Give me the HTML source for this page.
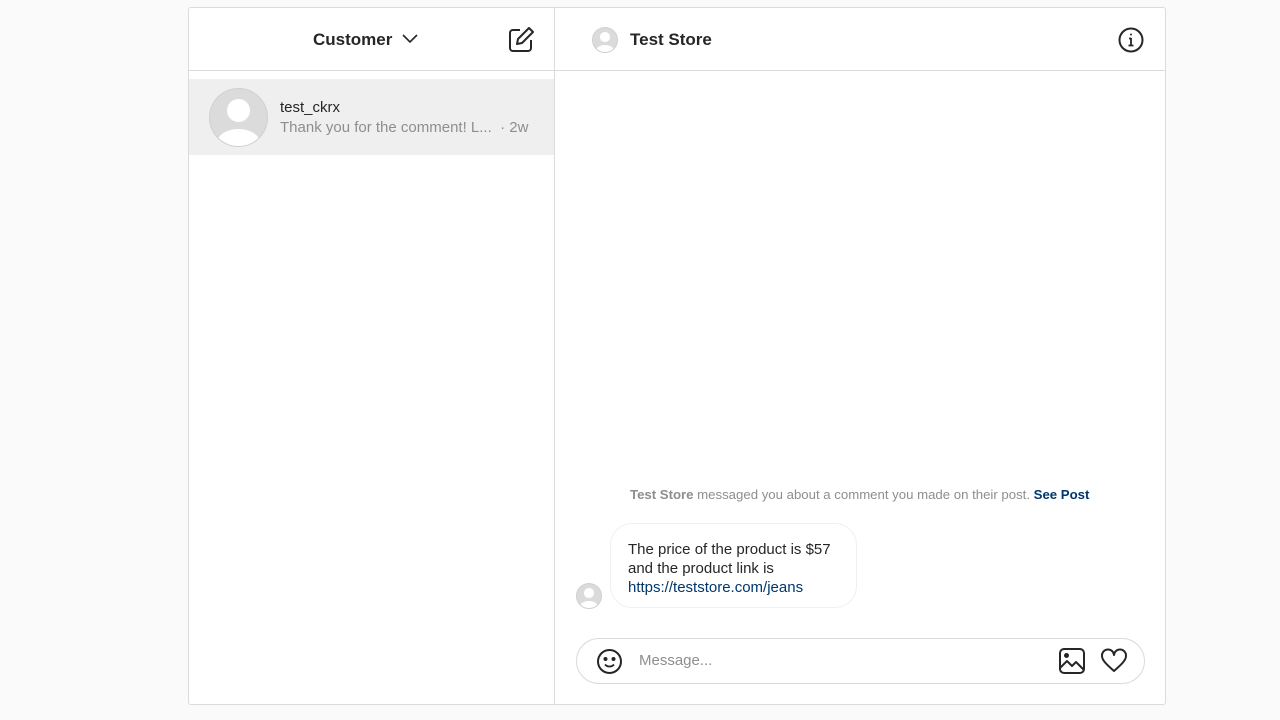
<!DOCTYPE html>
<html><head><meta charset="utf-8"><style>
*{margin:0;padding:0;box-sizing:border-box}
body{width:1280px;height:720px;background:#fafafa;font-family:"Liberation Sans",sans-serif;color:#262626;position:relative;overflow:hidden}
.panel{position:absolute;left:188px;top:7px;width:978px;height:698px;background:#fff;border:1px solid #dbdbdb;border-radius:3px}
.div{position:absolute;left:365px;top:0;bottom:0;width:1px;background:#dbdbdb}
.hline{position:absolute;left:0;right:0;top:62px;height:1px;background:#dbdbdb}
.abs{position:absolute}
.av{position:absolute;border-radius:50%;background:#dbdbdb;overflow:hidden;border:1px solid #d0d0d0}
.av:before{content:"";position:absolute;left:30%;top:18%;width:40%;height:40%;border-radius:50%;background:#fff}
.av:after{content:"";position:absolute;left:12%;top:70%;width:76%;height:50%;border-radius:50%;background:#fff}
</style></head><body>
<div class="panel">
<div class="div"></div><div class="hline"></div>
<div class="abs" style="left:124px;top:22px;font-size:17px;font-weight:bold">Customer</div>
<svg class="abs" style="left:212px;top:25px" width="18" height="12" viewBox="0 0 18 12"><path d="M2 2l7 7 7-7" fill="none" stroke="#262626" stroke-width="1.6"/></svg>
<svg class="abs" style="left:318px;top:18px" width="28" height="28" viewBox="0 0 28 28" fill="none" stroke="#262626" stroke-width="2" stroke-linejoin="round"><path d="M13 4H6a3 3 0 0 0-3 3v15a3 3 0 0 0 3 3h15a3 3 0 0 0 3-3v-8"/><path d="M22 2l4 4-11 11-5 1 1-5z"/></svg>
<div class="abs" style="left:0;top:71px;width:365px;height:76px;background:#efefef"></div>
<div class="av" style="left:20px;top:80px;width:59px;height:59px"></div>
<div class="abs" style="left:91px;top:91px;font-size:15px">test_ckrx</div>
<div class="abs" style="left:91px;top:111px;font-size:15px;color:#8e8e8e">Thank you for the comment! L...&nbsp; · 2w</div>
<div class="av" style="left:403px;top:19px;width:26px;height:26px"></div>
<div class="abs" style="left:441px;top:22px;font-size:17px;font-weight:bold">Test Store</div>
<svg class="abs" style="left:929px;top:19px" width="26" height="26" viewBox="0 0 26 26" fill="none" stroke="#262626" stroke-width="2"><circle cx="13" cy="13" r="11.5"/><path d="M13 11v7M10.5 18.5h5M11 11.5h2" stroke-width="1.8"/><circle cx="13" cy="7.5" r="1" fill="#262626" stroke="none"/></svg>
<div class="abs" style="left:441px;top:479px;font-size:13.2px;color:#8e8e8e;white-space:nowrap"><b>Test Store</b> messaged you about a comment you made on their post. <b style="color:#00376b">See Post</b></div>
<div class="abs" style="left:421px;top:515px;width:247px;height:85px;border:1px solid #efefef;border-radius:22px;padding:16px 0 0 17px;font-size:15px;line-height:19px">The price of the product is $57<br>and the product link is<br><span style="color:#00376b">https://teststore.com/jeans</span></div>
<div class="av" style="left:387px;top:575px;width:26px;height:26px"></div>
<div class="abs" style="left:387px;top:630px;width:569px;height:46px;border:1px solid #dbdbdb;border-radius:23px"></div>
<svg class="abs" style="left:407px;top:640px" width="27" height="27" viewBox="0 0 27 27" fill="none" stroke="#262626" stroke-width="2"><circle cx="13.5" cy="13.5" r="11.5"/><path d="M9 16.5a6 6 0 0 0 9 0" stroke-width="1.8"/><circle cx="9.5" cy="11" r="1" fill="#262626"/><circle cx="17.5" cy="11" r="1" fill="#262626"/></svg>
<div class="abs" style="left:450px;top:644px;font-size:15px;color:#8e8e8e">Message...</div>
<svg class="abs" style="left:869px;top:639px" width="28" height="28" viewBox="0 0 28 28" fill="none" stroke="#262626" stroke-width="2" stroke-linejoin="round"><rect x="2" y="2" width="24" height="24" rx="4"/><path d="M2 21l7-7 5 5 4-4 8 8"/><circle cx="8.5" cy="8.5" r="1.5" fill="#262626"/></svg>
<svg class="abs" style="left:911px;top:640px" width="28" height="26" viewBox="0 0 28 26" fill="none" stroke="#262626" stroke-width="2" stroke-linejoin="round"><path d="M14 23C6 16 2 12 2 8a6 6 0 0 1 12-1 6 6 0 0 1 12 1c0 4-4 8-12 15z"/></svg>
</div>
</body></html>
